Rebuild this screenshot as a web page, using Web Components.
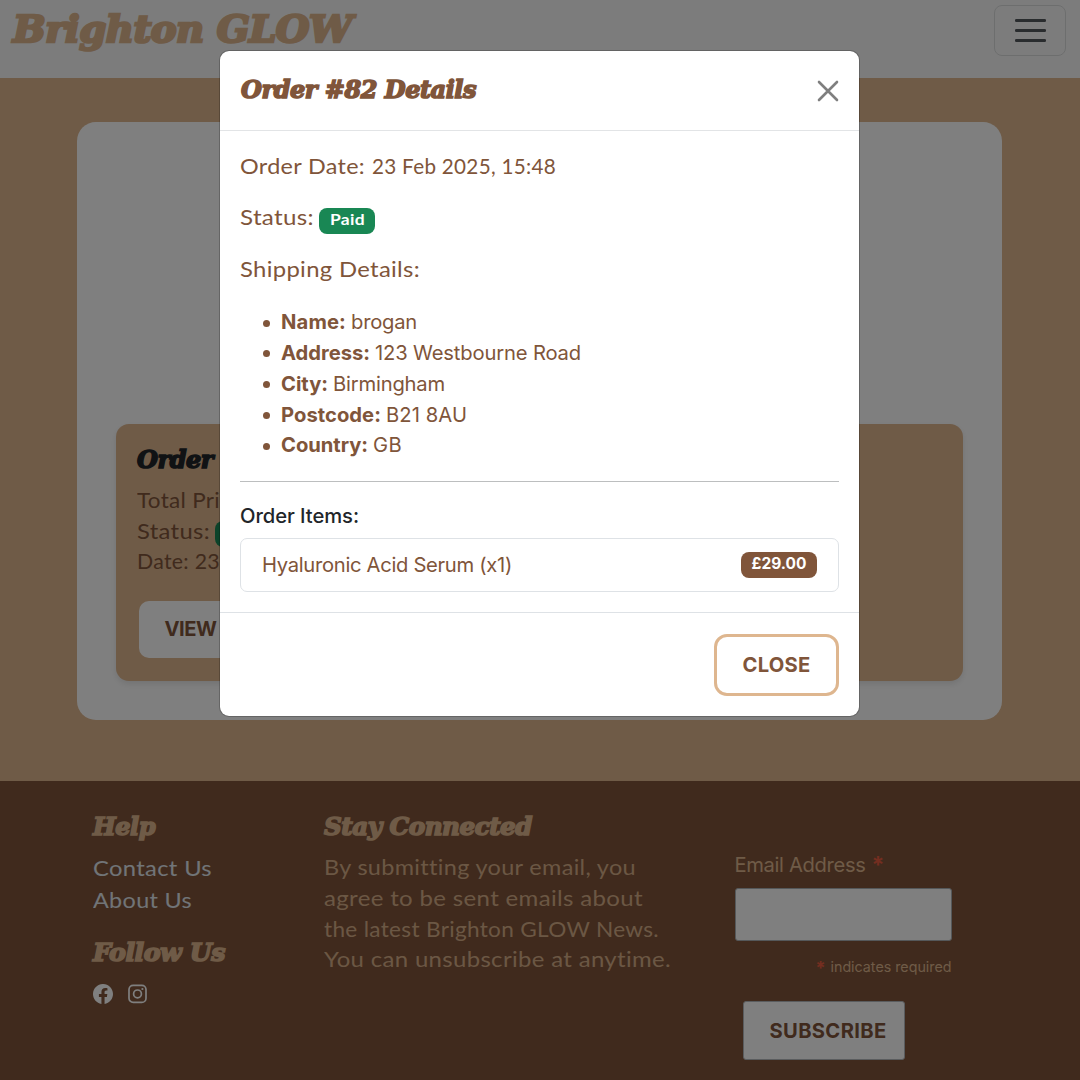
<!DOCTYPE html>
<html lang="en">
<head>
<meta charset="utf-8">
<title>Brighton GLOW</title>
<style>
html,body{margin:0;padding:0;width:1080px;height:1080px;overflow:hidden}
body{
  --tan:#deb68f;--brown:#80553a;--green:#198754;
  --display:"DejaVu Serif","Liberation Serif",serif;
  --round:Lato,"Open Sans",sans-serif;
  --ui:Inter,"Liberation Sans",sans-serif;
  background:var(--tan);font-family:var(--ui);font-size:20px;color:var(--brown);
}
</style>
</head>
<body>
<glow-app></glow-app>
<script>
const define=(name,html,after)=>{
  const t=document.createElement('template');
  t.innerHTML=html;
  customElements.define(name,class extends HTMLElement{
    constructor(){super();this.attachShadow({mode:'open'}).append(t.content.cloneNode(true));}
    connectedCallback(){if(after)after(this);}
  });
};

/* One line of type set to the width given in "w": display and round faces
   are widened, the interface face is tracked. */
define('type-line',`<style>
:host{display:block;white-space:nowrap;line-height:30.8px;font-size:20.2px}
:host([face=display]){font:italic 700 24.5px/30px var(--display);-webkit-text-stroke:1.6px currentColor}
:host([face=round]){font-family:var(--round);font-size:21.6px}
span{display:inline-block;font-variant-ligatures:none;transform-origin:0 50%}
</style><span><slot></slot></span>`,el=>{
  const w=parseFloat(el.getAttribute('w'));
  if(!w)return;
  const s=el.shadowRoot.querySelector('span');
  const n=el.textContent.length;
  s.style.letterSpacing='0px';
  if(el.hasAttribute('face')){
    s.style.letterSpacing=el.getAttribute('face')==='round'?'.3px':'-.5px';
    const k=w/s.getBoundingClientRect().width;
    el.style.width=w+'px';
    s.style.transform='scaleX('+k+')';
  }else{
    s.style.letterSpacing=((w-s.getBoundingClientRect().width)/n)+'px';
  }
});

define('pill-badge',`<style>
:host{display:flex;align-items:center;justify-content:center;height:26px;border-radius:8px;
background:var(--pill,var(--green));color:#fff;font-weight:700;box-sizing:border-box}
</style><slot></slot>`);

define('glow-header',`<style>
:host{display:flex;justify-content:space-between;align-items:flex-start;height:78px;box-sizing:border-box;
padding:5px 14px 0 13px;background:#f9f9f9}
type-line{font-size:37.5px;line-height:48px;color:var(--tan);-webkit-text-stroke:2.6px currentColor}
button{display:flex;flex-direction:column;align-items:center;justify-content:center;gap:7.7px;width:72px;height:51px;
padding:0;background:none;border:1px solid #dbdddd;border-radius:8px}
i{width:31px;height:2.6px;border-radius:1.3px;background:#53585c}
</style><type-line face="display" w="339">Brighton GLOW</type-line>
<button aria-label="Menu"><i></i><i></i><i></i></button>`);

define('order-card',`<style>
:host{display:flex;flex-direction:column;align-items:flex-start;box-sizing:border-box;height:257px;padding:20.5px 21px 0;
border-radius:13px;background:var(--tan);box-shadow:0 3px 6px rgba(0,0,0,.1)}
.t{color:#212529;margin-bottom:10px;height:30px}
.row{display:flex;align-items:center;gap:5px;height:30.8px}
pill-badge{width:56px;margin-top:6px}
button{margin:23.5px 0 0 2px;width:206px;height:57px;border:0;border-radius:10px;background:#fff;padding:1px 26px 0;
font:700 20px var(--ui);color:var(--brown);text-align:left;white-space:nowrap}
</style>
<type-line class="t" face="display" w="76">Order</type-line>
<type-line face="round" w="83">Total Pri</type-line>
<div class="row"><type-line face="round" w="73">Status:</type-line><pill-badge></pill-badge></div>
<type-line face="round" w="83">Date: 23</type-line>
<button><type-line w="52">VIEW</type-line></button>`);

define('orders-page',`<style>
:host{display:block;height:703px;box-sizing:border-box;padding:44px 78px 0 77px}
main{height:598px;box-sizing:border-box;padding:302.4px 39px 0 38.5px;border-radius:19px;background:#fff}
</style><main><order-card></order-card></main>`);

define('glow-footer',`<style>
:host{display:grid;grid-template-columns:231px 410.5px 217px;height:299px;box-sizing:border-box;padding:31px 0 0 93px;
background:var(--brown);color:var(--tan)}
.h{height:30px}
.l{color:#e2e8ee;line-height:32px}
.links{margin:10px 0 22px}
.icons{display:flex;gap:15px;margin-top:16px}
.copy{margin-top:10px;opacity:.93}
form{padding-top:38px}
.label,.req{display:flex}
.label{gap:6px}
.field{height:53px;box-sizing:border-box;margin:7.2px 0 11.5px;border:1px solid #aab0b5;border-radius:3px;background:#fff}
.req{justify-content:flex-end;gap:5px}
.req type-line{font-size:14.3px}
b{color:#e85c41;font-weight:700;line-height:30.8px}
button{display:flex;align-items:center;justify-content:center;width:162px;height:59px;margin:16.7px 0 0 8px;padding:1px 0 0 9px;
border:1px solid #b5b9bc;border-radius:3px;background:#fff;color:var(--brown);font:700 20px var(--ui)}
</style>
<section>
<type-line class="h" face="display" w="62">Help</type-line>
<div class="links"><type-line class="l" face="round" w="119">Contact Us</type-line><type-line class="l" face="round" w="99">About Us</type-line></div>
<type-line class="h" face="display" w="132">Follow Us</type-line>
<div class="icons">
<svg width="20" height="20" viewBox="0 0 16 16" fill="#fff"><path d="M16 8.049c0-4.446-3.582-8.05-8-8.05C3.58 0-.002 3.603-.002 8.05c0 4.017 2.926 7.347 6.75 7.951v-5.625h-2.03V8.05H6.75V6.275c0-2.017 1.195-3.131 3.022-3.131.876 0 1.791.157 1.791.157v1.98h-1.009c-.993 0-1.303.621-1.303 1.258v1.51h2.218l-.354 2.326H9.25V16c3.824-.604 6.75-3.934 6.75-7.951"/></svg>
<svg width="19" height="20" viewBox="0 0 19 20" fill="none" stroke="#fff" stroke-width="1.7"><rect x="1" y="1.4" width="17" height="17" rx="4.2"/><circle cx="9.5" cy="9.9" r="3.9"/><circle cx="14.4" cy="5" r="1.1" fill="#fff" stroke="none"/></svg>
</div></section>
<section>
<type-line class="h" face="display" w="208">Stay Connected</type-line>
<div class="copy"><type-line face="round" w="312">By submitting your email, you</type-line><type-line face="round" w="319">agree to be sent emails about</type-line><type-line face="round" w="335">the latest Brighton GLOW News.</type-line><type-line face="round" w="347">You can unsubscribe at anytime.</type-line></div>
</section>
<form>
<div class="label"><type-line w="131">Email Address</type-line><b style="font-size:23px">*</b></div>
<div class="field"></div>
<div class="req"><b style="font-size:18px;margin-top:1px">*</b><type-line w="121">indicates required</type-line></div>
<button type="button"><type-line w="117">SUBSCRIBE</type-line></button>
</form>`);

define('order-modal',`<style>
:host{display:flex;flex-direction:column;width:641px;height:667px;box-sizing:border-box;border:1px solid rgba(0,0,0,.2);
border-radius:10px;background:#fff;background-clip:padding-box}
header{display:flex;justify-content:space-between;align-items:center;height:80px;box-sizing:border-box;padding:0 20px 0 21px;border-bottom:1px solid #e2e4e6}
header type-line{margin-top:-1px}
.body{height:481px;box-sizing:border-box;padding:20px 20px 0}
.p{margin-bottom:20.6px}
.row{display:flex;gap:5px;height:30.8px}
.row pill-badge{width:56px;height:26px;margin-top:5.5px}
.date{display:flex;gap:6.5px}
ul{margin:0;padding:2px 0 0 41px;list-style:none}
li{display:flex;gap:5px;align-items:center;height:30.8px}
li::before{content:"";width:7px;height:7px;border-radius:50%;background:var(--brown);margin:1px 6px 0 -18px}
hr{margin:19.6px 0 19.5px;border:0;border-top:1px solid #bcbebf}
.items{color:#212529;font-weight:500}
.item{display:flex;align-items:center;justify-content:space-between;height:54px;box-sizing:border-box;margin-top:5.5px;padding:0 21px;
border:1px solid #dee2e6;border-radius:7px}
.item>type-line{padding-top:1px}
.item pill-badge{--pill:var(--brown);width:76px}
footer{flex:1;display:flex;justify-content:flex-end;align-items:flex-start;padding:21px 20px 0;border-top:1px solid #dee2e6}
button.c{display:flex;align-items:center;justify-content:center;width:125px;height:61.5px;box-sizing:border-box;padding:1px 0 0;border:3px solid var(--tan);
border-radius:13px;background:#fff;color:var(--brown);font:700 20px var(--ui)}
</style>
<header><type-line face="display" w="235">Order #82 Details</type-line>
<svg width="22" height="22" viewBox="0 0 22 22" stroke="#7f7f7f" stroke-width="2.6" stroke-linecap="round"><path d="M2 2L20 20M20 2L2 20"/></svg></header>
<div class="body">
<div class="date p"><type-line face="round" w="125">Order Date:</type-line><type-line face="round" w="184">23 Feb 2025, 15:48</type-line></div>
<div class="row p"><type-line face="round" w="74">Status:</type-line><pill-badge><type-line face="round" style="font-size:16px;margin-top:-3px" w="35">Paid</type-line></pill-badge></div>
<type-line class="p" face="round" w="180">Shipping Details:</type-line>
<ul>
<li><type-line style="font-weight:700" w="65">Name:</type-line><type-line w="66">brogan</type-line></li>
<li><type-line style="font-weight:700" w="89">Address:</type-line><type-line w="206">123 Westbourne Road</type-line></li>
<li><type-line style="font-weight:700" w="47">City:</type-line><type-line w="112">Birmingham</type-line></li>
<li><type-line style="font-weight:700" w="100">Postcode:</type-line><type-line w="81">B21 8AU</type-line></li>
<li><type-line style="font-weight:700" w="87">Country:</type-line><type-line w="29">GB</type-line></li>
</ul>
<hr>
<type-line class="items" w="119">Order Items:</type-line>
<div class="item"><type-line w="250">Hyaluronic Acid Serum (x1)</type-line><pill-badge><type-line style="font-size:15.5px" w="55">£29.00</type-line></pill-badge></div>
</div>
<footer><button class="c"><type-line w="68">CLOSE</type-line></button></footer>`);

define('glow-app',`<style>
:host{display:block;width:1080px;height:1080px;overflow:hidden;position:relative}
.veil{position:absolute;inset:0;background:rgba(0,0,0,.5)}
.dialog{position:absolute;inset:0;display:flex;justify-content:center;align-items:flex-start;padding:50px 1px 0 0}
</style>
<glow-header></glow-header><orders-page></orders-page><glow-footer></glow-footer>
<div class="veil"></div><div class="dialog"><order-modal></order-modal></div>`);
</script>
</body>
</html>
